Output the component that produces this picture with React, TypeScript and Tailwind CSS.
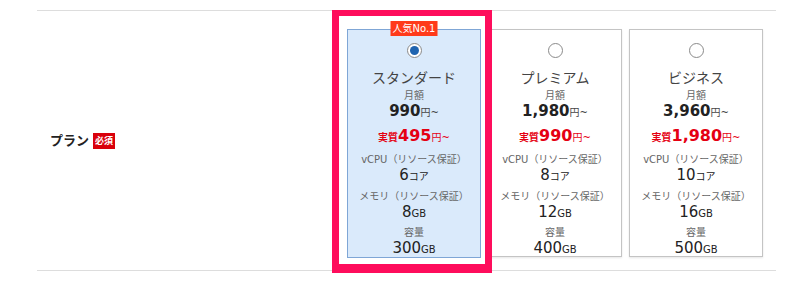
const plans = [
  { name: 'スタンダード', price: '990', real: '495', cpu: '6', mem: '8', disk: '300', selected: true },
  { name: 'プレミアム', price: '1,980', real: '990', cpu: '8', mem: '12', disk: '400', selected: false },
  { name: 'ビジネス', price: '3,960', real: '1,980', cpu: '10', mem: '16', disk: '500', selected: false },
];

const font = { fontFamily: '"DejaVu Sans", "Noto Sans CJK JP", sans-serif' };

function Radio({ checked }: { checked: boolean }) {
  return (
    <div className="flex h-[15px] w-[15px] items-center justify-center rounded-full border border-[#8a8a8a] bg-white">
      {checked && <div className="h-[9px] w-[9px] rounded-full bg-[#1f64b0]" />}
    </div>
  );
}

export default function App() {
  return (
    <div className="relative h-[285px] w-[800px] bg-white pt-[10px] text-[#333]" style={font}>
      <div className="ml-[37px] flex w-[739px] border-y border-[#dddddd]">
        {/* Label */}
        <div className="flex w-[310px] items-center gap-[4px] pl-[13px]">
          <span className="text-[13px] font-bold text-[#222]">プラン</span>
          <span className="bg-[#d9000b] px-[2px] text-[9px] leading-[16px] font-bold text-white">必須</span>
        </div>

        {/* Plans */}
        <div className="flex gap-[7px] pt-[18px] pb-[12px]">
          {plans.map((p) => (
            <div
              key={p.name}
              className={
                p.selected
                  ? 'relative flex h-[229px] w-[134px] flex-col items-center border border-[#7fa6d6] bg-[#daeafb]'
                  : 'relative flex h-[228px] w-[134px] flex-col items-center border border-[#c4c4c4] bg-white shadow-[0_1px_2px_rgba(0,0,0,0.1)]'
              }
            >
              {p.selected && (
                <span className="absolute top-[-9px] left-1/2 -translate-x-1/2 bg-[#ff3a1a] px-[2px] text-[10px] leading-[15px] whitespace-nowrap text-white">
                  人気No.1
                </span>
              )}
              <div className="mt-[13px]">
                <Radio checked={p.selected} />
              </div>
              <div className="mt-[11px] text-[14px] leading-[18px] text-[#444]">{p.name}</div>
              <div className="mt-[2px] text-[10px] leading-[14px] text-[#666]">月額</div>
              <div className="text-[15px] leading-[16px] font-bold text-[#222]">
                {p.price}
                <span className="text-[10px] font-normal text-[#444]">円~</span>
              </div>
              <div className="mt-[5px] text-[16px] leading-[20px] font-bold text-[#e50012]">
                <span className="text-[10px]">実質</span>
                {p.real}
                <span className="text-[10px] font-normal">円~</span>
              </div>
              <div className="mt-[5px] text-[10px] leading-[14px] text-[#666]">vCPU（リソース保証）</div>
              <div className="text-[15px] leading-[16px] text-[#222]">
                {p.cpu}
                <span className="text-[10px]">コア</span>
              </div>
              <div className="mt-[5px] text-[10px] leading-[14px] text-[#666]">メモリ（リソース保証）</div>
              <div className="text-[15px] leading-[16px] text-[#222]">
                {p.mem}
                <span className="text-[10px]">GB</span>
              </div>
              <div className="mt-[4px] text-[10px] leading-[14px] text-[#666]">容量</div>
              <div className="text-[15px] leading-[16px] text-[#222]">
                {p.disk}
                <span className="text-[10px]">GB</span>
              </div>
            </div>
          ))}
        </div>
      </div>

      {/* Highlight annotation */}
      <div className="pointer-events-none absolute top-[10px] left-[332px] h-[263px] w-[160px] border-[7px] border-t-[6px] border-b-[9px] border-[#fe0d5c]" />
    </div>
  );
}
